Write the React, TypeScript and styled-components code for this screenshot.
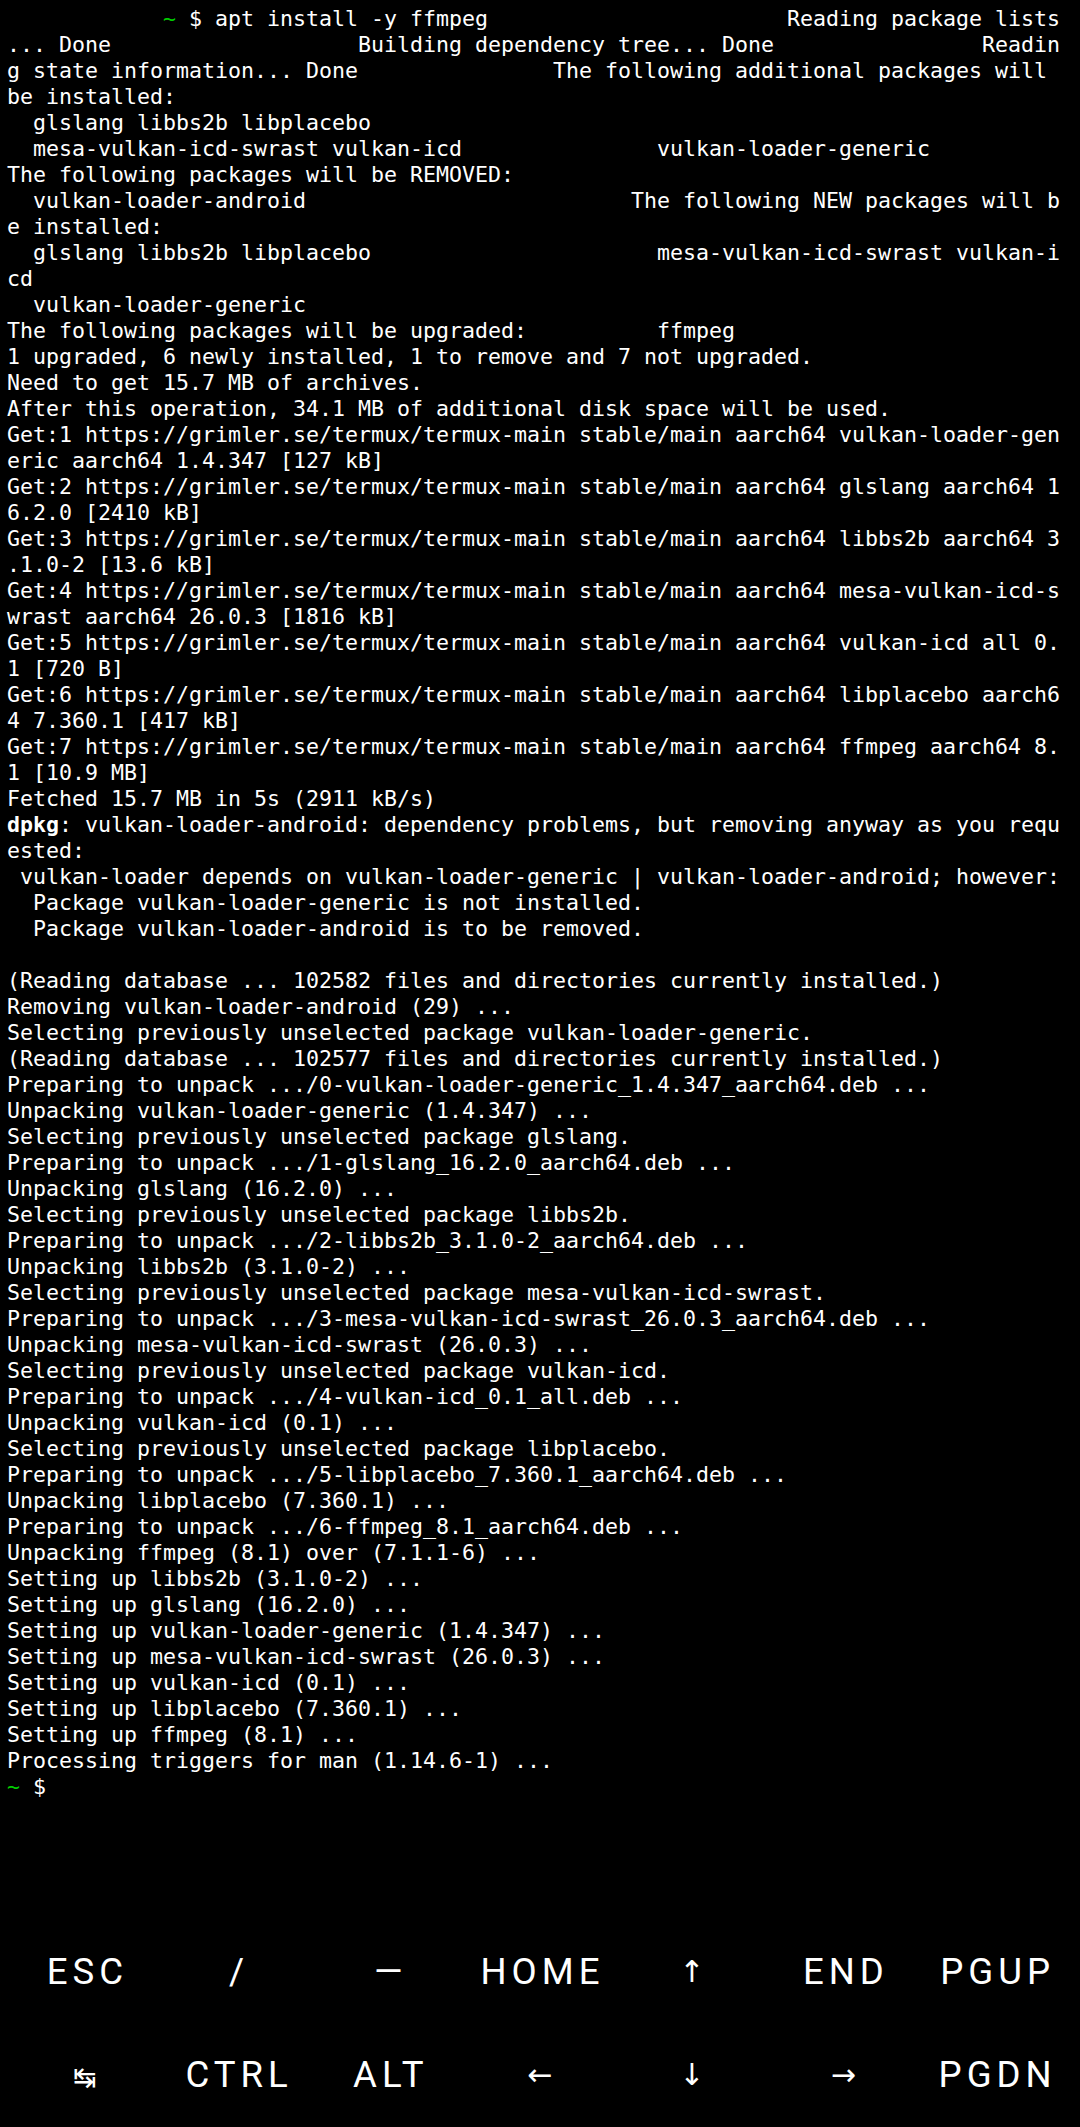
import React from 'react'
import styled, { createGlobalStyle } from 'styled-components'

const COLS = 81

type Tone = 'plain' | 'green' | 'bold'
type Seg = { text: string, tone?: Tone }
type Line = Seg[]

const plain = (text: string): Line => [{ text }]
const at = (left: string, col: number, right: string) => left.padEnd(col) + right
const wrap = (text: string): Line[] => {
  const out: Line[] = []
  for (let i = 0; i < text.length; i += COLS) out.push(plain(text.slice(i, i + COLS)))
  return out
}

const GET = 'https://grimler.se/termux/termux-main stable/main aarch64'
const fetched = [
  'vulkan-loader-generic aarch64 1.4.347 [127 kB]',
  'glslang aarch64 16.2.0 [2410 kB]',
  'libbs2b aarch64 3.1.0-2 [13.6 kB]',
  'mesa-vulkan-icd-swrast aarch64 26.0.3 [1816 kB]',
  'vulkan-icd all 0.1 [720 B]',
  'libplacebo aarch64 7.360.1 [417 kB]',
  'ffmpeg aarch64 8.1 [10.9 MB]',
]

const dpkg = wrap('dpkg: vulkan-loader-android: dependency problems, but removing anyway as you requested:')
dpkg[0] = [{ text: 'dpkg', tone: 'bold' }, { text: dpkg[0][0].text.slice(4) }]

const LINES: Line[] = [
  [
    { text: ' '.repeat(12) },
    { text: '~', tone: 'green' },
    { text: at(' $ apt install -y ffmpeg', 47, 'Reading package lists') },
  ],
  plain(at(at('... Done', 27, 'Building dependency tree... Done'), 75, 'Readin')),
  plain(at('g state information... Done', 42, 'The following additional packages will')),
  plain('be installed:'),
  plain('  glslang libbs2b libplacebo'),
  plain(at('  mesa-vulkan-icd-swrast vulkan-icd', 50, 'vulkan-loader-generic')),
  plain('The following packages will be REMOVED:'),
  plain(at('  vulkan-loader-android', 48, 'The following NEW packages will b')),
  plain('e installed:'),
  plain(at('  glslang libbs2b libplacebo', 50, 'mesa-vulkan-icd-swrast vulkan-i')),
  plain('cd'),
  plain('  vulkan-loader-generic'),
  plain(at('The following packages will be upgraded:', 50, 'ffmpeg')),
  plain('1 upgraded, 6 newly installed, 1 to remove and 7 not upgraded.'),
  plain('Need to get 15.7 MB of archives.'),
  plain('After this operation, 34.1 MB of additional disk space will be used.'),
  ...fetched.flatMap((pkg, i) => wrap(`Get:${i + 1} ${GET} ${pkg}`)),
  plain('Fetched 15.7 MB in 5s (2911 kB/s)'),
  ...dpkg,
  plain(' vulkan-loader depends on vulkan-loader-generic | vulkan-loader-android; however:'),
  plain('  Package vulkan-loader-generic is not installed.'),
  plain('  Package vulkan-loader-android is to be removed.'),
  plain(''),
  plain('(Reading database ... 102582 files and directories currently installed.)'),
  plain('Removing vulkan-loader-android (29) ...'),
  plain('Selecting previously unselected package vulkan-loader-generic.'),
  plain('(Reading database ... 102577 files and directories currently installed.)'),
  plain('Preparing to unpack .../0-vulkan-loader-generic_1.4.347_aarch64.deb ...'),
  plain('Unpacking vulkan-loader-generic (1.4.347) ...'),
  plain('Selecting previously unselected package glslang.'),
  plain('Preparing to unpack .../1-glslang_16.2.0_aarch64.deb ...'),
  plain('Unpacking glslang (16.2.0) ...'),
  plain('Selecting previously unselected package libbs2b.'),
  plain('Preparing to unpack .../2-libbs2b_3.1.0-2_aarch64.deb ...'),
  plain('Unpacking libbs2b (3.1.0-2) ...'),
  plain('Selecting previously unselected package mesa-vulkan-icd-swrast.'),
  plain('Preparing to unpack .../3-mesa-vulkan-icd-swrast_26.0.3_aarch64.deb ...'),
  plain('Unpacking mesa-vulkan-icd-swrast (26.0.3) ...'),
  plain('Selecting previously unselected package vulkan-icd.'),
  plain('Preparing to unpack .../4-vulkan-icd_0.1_all.deb ...'),
  plain('Unpacking vulkan-icd (0.1) ...'),
  plain('Selecting previously unselected package libplacebo.'),
  plain('Preparing to unpack .../5-libplacebo_7.360.1_aarch64.deb ...'),
  plain('Unpacking libplacebo (7.360.1) ...'),
  plain('Preparing to unpack .../6-ffmpeg_8.1_aarch64.deb ...'),
  plain('Unpacking ffmpeg (8.1) over (7.1.1-6) ...'),
  plain('Setting up libbs2b (3.1.0-2) ...'),
  plain('Setting up glslang (16.2.0) ...'),
  plain('Setting up vulkan-loader-generic (1.4.347) ...'),
  plain('Setting up mesa-vulkan-icd-swrast (26.0.3) ...'),
  plain('Setting up vulkan-icd (0.1) ...'),
  plain('Setting up libplacebo (7.360.1) ...'),
  plain('Setting up ffmpeg (8.1) ...'),
  plain('Processing triggers for man (1.14.6-1) ...'),
  [{ text: '~', tone: 'green' }, { text: ' $' }],
]

type Glyph = 'arrow' | 'tab'

// extra keys rows, glyph keys use the symbol font
const KEYS: { label: string, glyph?: Glyph }[][] = [
  [
    { label: 'ESC' }, { label: '/' }, { label: '—' }, { label: 'HOME' },
    { label: '↑', glyph: 'arrow' }, { label: 'END' }, { label: 'PGUP' },
  ],
  [
    { label: '↹', glyph: 'tab' }, { label: 'CTRL' }, { label: 'ALT' }, { label: '←', glyph: 'arrow' },
    { label: '↓', glyph: 'arrow' }, { label: '→', glyph: 'arrow' }, { label: 'PGDN' },
  ],
]

export default () => {
  return <Screen>
    <GlobalStyle />
    <Terminal>
      {LINES.map((line, i) => <Row key={i}>
        {line.map((seg, j) => <Span key={j} $tone={seg.tone || 'plain'}>{seg.text}</Span>)}
      </Row>)}
    </Terminal>
    <ExtraKeys>
      {KEYS.flat().map((k, i) => <Key key={i}>
        {k.glyph ? <Symbol $glyph={k.glyph}>{k.label}</Symbol> : <Label>{k.label}</Label>}
      </Key>)}
    </ExtraKeys>
  </Screen>
}

const GlobalStyle = createGlobalStyle`
html, body {
  margin: 0;
  padding: 0;
  background: #000;
}
#root {
  height: 100vh;
}
`

const Screen = styled.div`
  display: flex;
  flex-direction: column;
  height: 100vh;
  background: #000;
  overflow: hidden;
`

const Terminal = styled.div`
  flex: 1;
  padding: 6px 0 0 7px;
  font-family: "DejaVu Sans Mono", monospace;
  font-size: 21.6px;
  line-height: 26px;
  color: #fff;
  white-space: pre;
  overflow: hidden;
`

const Row = styled.div`
  height: 26px;
`

const Span = styled.span<{ $tone: Tone }>`
  color: ${p => p.$tone === 'green' ? '#00cd00' : '#fff'};
  font-weight: ${p => p.$tone === 'bold' ? 700 : 400};
`

const ExtraKeys = styled.div`
  display: grid;
  grid-template-columns: repeat(7, 1fr);
  grid-auto-rows: 103px;
  padding: 0 9px 1px;
`

const Key = styled.div`
  display: flex;
  align-items: center;
  justify-content: center;
  color: #fff;
`

const Label = styled.span`
  font-family: Roboto, "Noto Sans", sans-serif;
  font-size: 36.6px;
  letter-spacing: 5px;
  padding-left: 5px;
`

const Symbol = styled.span<{ $glyph: Glyph }>`
  font-family: "DejaVu Sans", sans-serif;
  font-size: ${p => p.$glyph === 'tab' ? '28px' : '30px'};
  ${p => p.$glyph === 'tab' ? 'transform: translateY(3px);' : ''}
`
